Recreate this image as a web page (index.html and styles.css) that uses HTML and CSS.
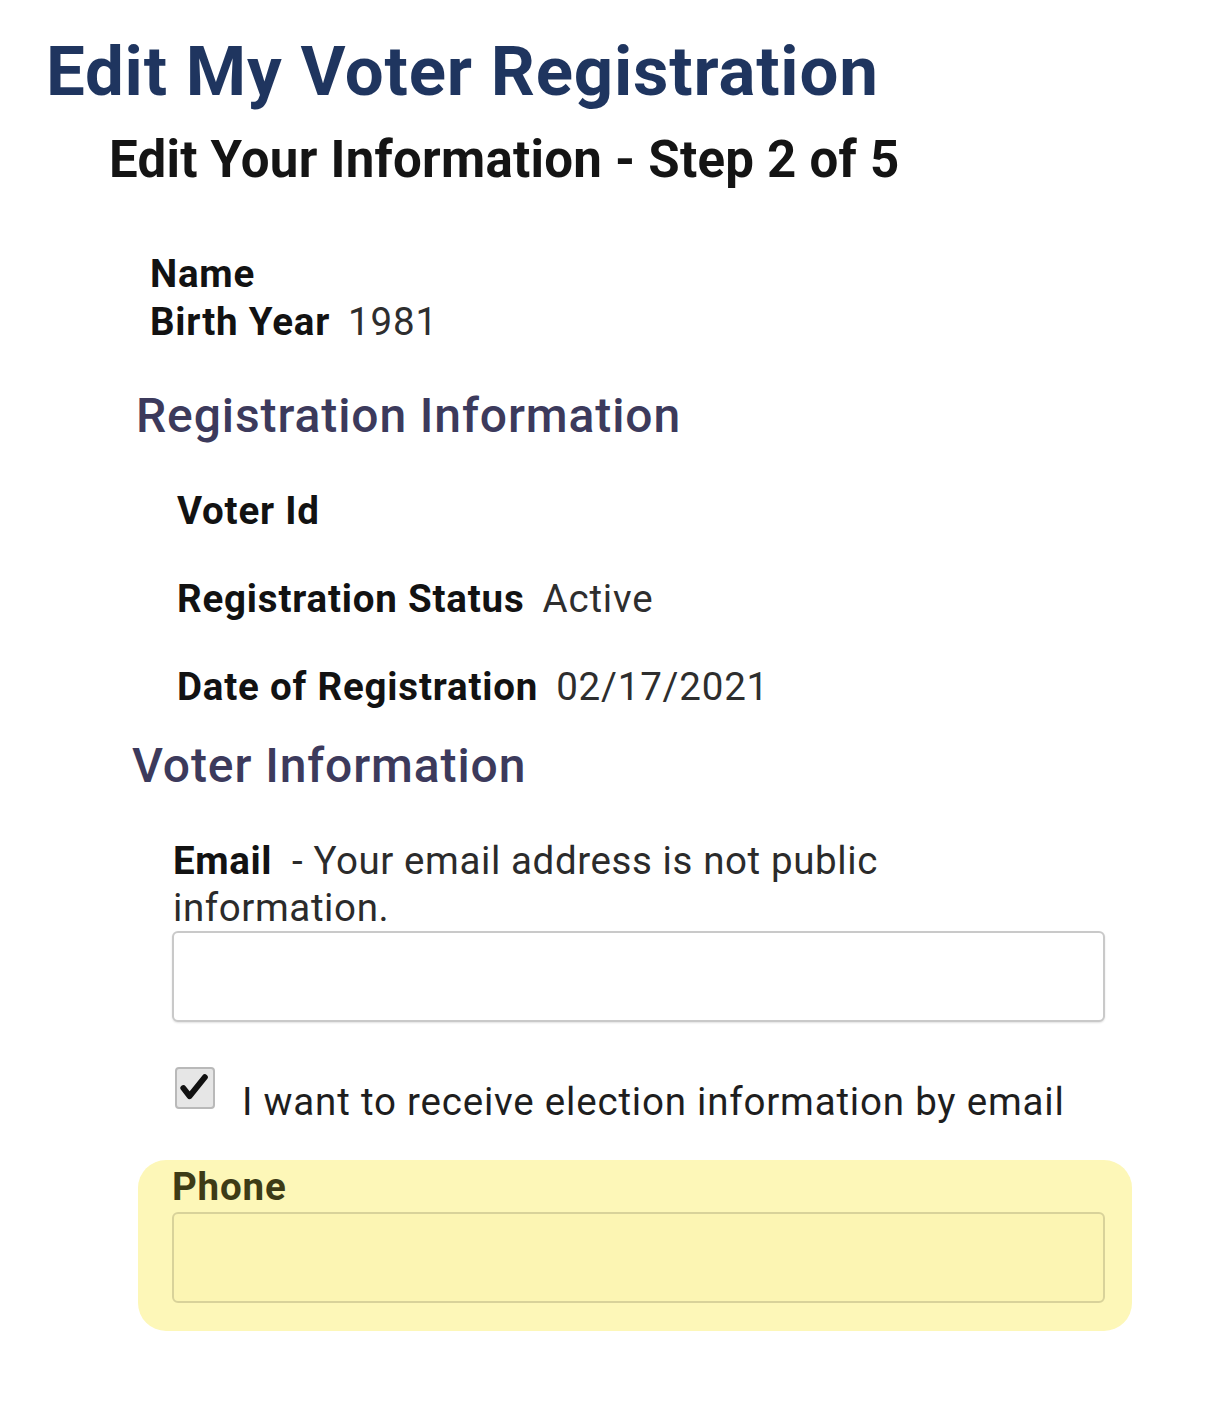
FILE: index.html
```html
<!DOCTYPE html>
<html lang="en">
<head>
<meta charset="utf-8">
<title>Edit My Voter Registration</title>
<link rel="stylesheet" href="styles.css">
</head>
<body>
<main class="page">
  <h1 class="title">Edit My Voter Registration</h1>
  <h2 class="subtitle">Edit Your Information - Step 2 of 5</h2>

  <div class="identity">
    <div class="line"><span class="lbl">Name</span></div>
    <div class="line"><span class="lbl">Birth Year</span><span class="val">1981</span></div>
  </div>

  <h3 class="section reg-head">Registration Information</h3>
  <div class="reg-rows">
    <div class="line"><span class="lbl">Voter Id</span></div>
    <div class="line"><span class="lbl">Registration Status</span><span class="val">Active</span></div>
    <div class="line"><span class="lbl">Date of Registration</span><span class="val">02/17/2021</span></div>
  </div>

  <h3 class="section voter-head">Voter Information</h3>
  <div class="fields">
    <label class="email-label"><span class="lbl">Email</span><span class="note">- Your email address is not public</span> <span class="note">information.</span></label>
    <div class="field"></div>

    <div class="check-row">
      <span class="checkbox">
        <svg viewBox="0 0 40 40" width="36" height="36" aria-hidden="true">
          <path d="M7 20 L14 29 L31 8" fill="none" stroke="#111" stroke-width="6.5" stroke-linecap="round" stroke-linejoin="round"/>
        </svg>
      </span>
      <span class="check-text">I want to receive election information by email</span>
    </div>
  </div>

  <div class="highlight">
    <div class="phone-label">Phone</div>
    <div class="field phone-field"></div>
  </div>
</main>
</body>
</html>
```

FILE: styles.css
```css
* { box-sizing: border-box; }
html, body { margin: 0; padding: 0; background: #ffffff; }
body {
  font-family: Roboto, "Noto Sans", "Liberation Sans", sans-serif;
  color: #111;
}
.page {
  padding-top: 32px;
  width: 1218px;
}
.title {
  margin: 0 0 0 46px;
  font-size: 69px;
  line-height: 80px;
  font-weight: 700;
  color: #1f355f;
  letter-spacing: 0.8px;
}
.subtitle {
  margin: 18px 0 0 109px;
  font-size: 51px;
  line-height: 60px;
  font-weight: 700;
  color: #141414;
  letter-spacing: 0.25px;
}
.identity {
  margin: 60px 0 0 150px;
}
.line {
  font-size: 38.5px;
  line-height: 48px;
  letter-spacing: 0.8px;
  display: flex;
  gap: 18px;
}
.lbl { font-weight: 700; color: #121212; }
.val { font-weight: 400; color: #2e2e2e; }
.section {
  margin: 0;
  font-size: 48px;
  line-height: 56px;
  font-weight: 500;
  color: #3c3a5c;
  letter-spacing: 0.9px;
}
.reg-head { margin: 42px 0 0 136px; }
.reg-rows {
  margin: 43px 0 0 177px;
  display: flex;
  flex-direction: column;
  gap: 40px;
}
.voter-head { margin: 27px 0 0 132px; }
.fields {
  margin: 43px 0 0 172px;
  width: 933px;
}
.email-label {
  display: block;
  max-width: 860px;
  font-size: 38.5px;
  line-height: 47px;
  letter-spacing: 0.6px;
  padding-left: 1px;
}
.email-label .lbl { margin-right: 20px; }
.email-label .note { color: #2b2b2b; }
.field {
  width: 933px;
  height: 91px;
  border: 2px solid #c9c9c9;
  border-radius: 6px;
  background: #fff;
  box-shadow: 0 1px 2px rgba(0,0,0,0.12);
}
.check-row {
  margin-top: 45px;
  display: flex;
  align-items: flex-start;
  gap: 27px;
  padding-left: 3px;
}
.checkbox {
  width: 40px;
  height: 42px;
  border: 2px solid #b9b9b9;
  border-radius: 4px;
  background: #e6e6e6;
  display: flex;
  align-items: center;
  justify-content: center;
  flex: none;
}
.checkbox svg { display: block; }
.check-text {
  font-size: 38.5px;
  line-height: 44px;
  letter-spacing: 0.8px;
  color: #1e1e1e;
  margin-top: 13px;
}
.highlight {
  margin: 36px 0 0 138px;
  width: 994px;
  background: #fdf7b8;
  border-radius: 28px;
  padding: 5px 27px 28px 34px;
}
.phone-label {
  font-size: 38.5px;
  line-height: 44px;
  letter-spacing: 0.8px;
  font-weight: 700;
  color: #3d3b16;
}
.phone-field {
  margin-top: 3px;
  background: #fcf5b3;
  border-color: #d8d29a;
  box-shadow: none;
}
```
